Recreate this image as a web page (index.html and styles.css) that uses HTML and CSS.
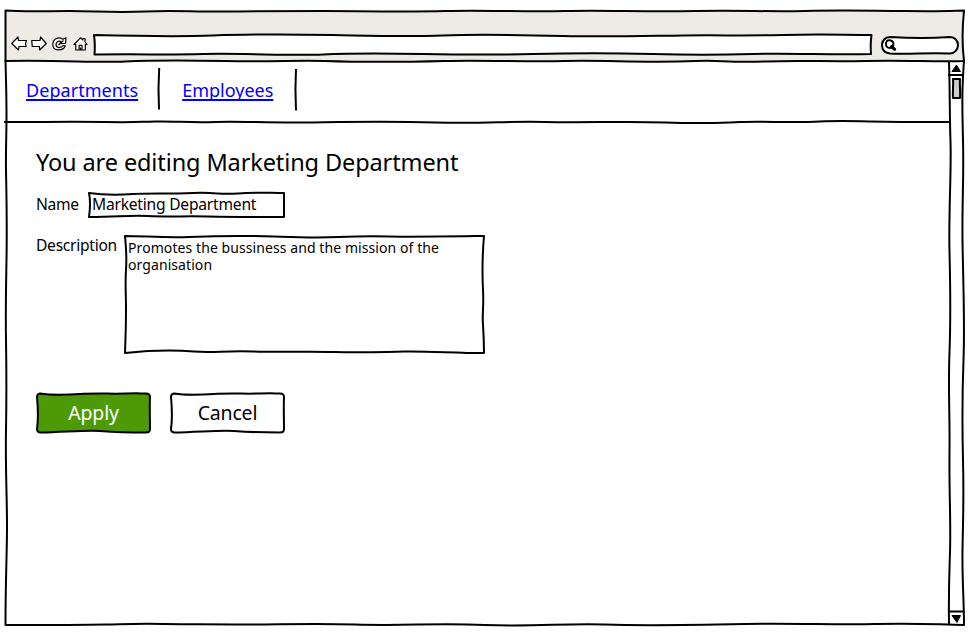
FILE: index.html
```html
<!DOCTYPE html>
<html lang="en">
<head>
<meta charset="utf-8">
<title>Marketing Department</title>
<link rel="stylesheet" href="styles.css">
</head>
<body>
<div class="window">
  <header class="toolbar">
    <svg class="sketch" viewBox="0 0 960 52"><path class="chrome" d="M0.500 0.500 C20 2 40 1 65 1 S110 3 140 1.500 S190 2 220 1.500 S290 1 320 1 S400 2 440 1 S520 2 560 1 S640 2 690 1 S760 2 800 1 S870 1 900 1 S930 2 959 0.500 C957 20 957 35 959 51 C930 52 900 50 860 51 S800 50 760 51.500 S715 49.500 690 51 C640 53 600 50 560 51 S480 50 440 51 S350 52 320 51 S270 52 220 51 S150 50 120 51.500 S60 50 0.500 51 Z"/></svg>
    <nav class="tools">
      <svg class="icon" width="16" height="15" viewBox="0 0 16 15"><path d="M0.700 7.500 L7 1 L7.500 4.500 L15.500 4.500 L14.500 7.500 L15 10.500 L8 10.500 L7.500 14 Z"/></svg>
      <svg class="icon" width="16" height="15" viewBox="0 0 16 15"><path d="M15.300 7.500 L9.500 1 L9 4.500 L0.700 4.500 L1.300 10.500 L8.500 10.500 L8.700 14 Z"/></svg>
      <svg class="icon" width="15" height="14" viewBox="0 0 15 14"><path d="M11 2.300 L14 0.800 L13.500 6.300 L7.800 6.500 L9.300 4.600 C7 3.200 4 4.700 4 7.500 C4 11 9 11.600 11 8.500 L13.300 8.800 C11 14.500 1 14.500 0.800 7.700 C0.700 1.500 7 -0.700 11 2.300 Z M6.500 8 L11.500 3.500"/></svg>
      <svg class="icon" width="15" height="14" viewBox="0 0 15 14"><path d="M1 7.500 L7.500 0.800 L9.800 3 L10 1.500 L12 1.500 L12 5 L14 7.500 L12.300 7.500 L12.300 13 L2.800 13 L2.800 7.500 Z M6 13 L6.200 8.300 L9 8.300 L9 13 M7.500 10.500 V13"/></svg>
    </nav>
    <div class="address"><svg class="sketch" viewBox="0 0 780 22"><path class="box" d="M1 1 C40 2 80 3 120 1.500 S210 0.500 240 1 S310 3 350 1.500 S430 1 470 2 S550 2 590 1.500 S650 2 690 1 S750 1 778.500 1 C777.500 8 777.500 14 778 20 C740 21 700 19 660 20 S600 21 560 20 S480 19 440 20 S380 21 330 20 S260 19 230 20.500 S150 19 110 20 S60 20 1.500 20.500 C2 14 2 8 1 1 Z"/></svg></div>
    <div class="search"><svg class="sketch" viewBox="0 0 78 19"><path class="box" d="M9 1 C24 2 44 3 69 1 C74 1 77 5 77 9 C77 14 73 17.500 69 17.500 C44 16.500 30 18.500 9 17.500 C4 17 1 14 1 9 C1 5 4 1 9 1 Z"/><path class="lens" d="M5.300 6 C6 3.700 11 3.700 12.200 6.500 C13 9 11.500 12 8.700 12 C5.500 12 4.200 9 5.300 6 Z"/><path class="handle" d="M10.500 10.500 L13.700 13.300"/></svg></div>
  </header>
  <div class="view">
    <main class="page">
      <nav class="links">
        <a href="#" class="departments">Departments</a>
        <svg class="divider" width="4" height="42" viewBox="0 0 4 42"><path d="M2.200 0 C1.300 14 1.300 28 2 41.500"/></svg>
        <a href="#" class="employees">Employees</a>
        <svg class="divider low" width="4" height="42" viewBox="0 0 4 42"><path d="M2 0 C1.200 14 1.300 28 2 41.500"/></svg>
        <svg class="rule" viewBox="0 0 946 4"><path d="M-1 2 C40 2 70 1.500 100 2 S130 2 150 1.500 S185 3 210 2 S260 3 300 2.500 S380 1 430 2.500 S500 1 540 2 S620 1 660 2.500 S710 3 735 2 S785 3 815 1.500 S870 2.500 944 2"/></svg>
      </nav>
      <section class="form">
        <h1>You are editing Marketing Department</h1>
        <div class="field name">
          <label>Name</label>
          <div class="input"><svg class="sketch" viewBox="0 0 197 26"><path class="box" d="M1 1 C15 3 30 3 45 2 S80 2 105 1 S130 3 150 1.500 S180 1 196 1 L196 25 C170 25 145 25 120 24.500 S80 25 60 24 S30 25 1 25 C2 18 2.500 8 1 1 Z"/></svg><span>Marketing Department</span></div>
        </div>
        <div class="field description">
          <label>Description</label>
          <div class="input area"><svg class="sketch" viewBox="0 0 361 119"><path class="box" d="M1 1 C20 1 40 3 65 2 S120 0.500 150 1.500 S190 3 215 2 S245 1 265 1.500 S320 1.500 360 1 C358.500 18 358 35 359 55 S358 75 359 90 S360 105 360 118 C330 118 305 116 280 116.500 S240 118 210 117 S160 117.500 130 116.500 S90 118 70 116.500 S30 115 1 118 C1.500 105 2 95 2 75 S1 50 2 35 S2 12 1 1 Z"/></svg><span>Promotes the bussiness and the mission of the<br>organisation</span></div>
        </div>
        <div class="actions">
          <button class="apply" type="button"><svg class="sketch" viewBox="0 0 115 41"><path class="box" d="M4 1.500 C14 3 28 3 44 2 S75 2 90 1.500 S104 1.500 110 1.500 Q114 1.500 114 5 C113.500 16 114 26 114 37 Q114 40.500 110 40.500 C95 40.500 78 40 64 39 S30 40 4 40.500 Q1 40 1 37 C2.500 27 2 16 1 5 Q1 2 4 1.500 Z"/></svg><span>Apply</span></button>
          <button class="cancel" type="button"><svg class="sketch" viewBox="0 0 115 41"><path class="box" d="M4 1.500 C14 3 28 3 44 2 S75 2 90 1.500 S104 1.500 110 1.500 Q114 1.500 114 5 C113.500 16 114 26 114 37 Q114 40.500 110 40.500 C95 40.500 78 40 64 39 S30 40 4 40.500 Q1 40 1 37 C2.500 27 2 16 1 5 Q1 2 4 1.500 Z"/></svg><span>Cancel</span></button>
        </div>
      </section>
    </main>
    <aside class="scrollbar"><svg class="sketch" viewBox="0 0 16 564"><path d="M1 0 C2 30 1.500 50 2.500 80 S0.500 150 1.500 190 S3 250 1.500 290 S2 350 1.500 390 S3 460 2 490 S0.500 530 1 563 M0 13 H16 M1 549.500 H15"/><path class="arrow" d="M8.500 3 L12.500 9.500 H4 Z M4 553.500 H12.500 L9 560.500 Z"/><path class="thumb" d="M5 17 H12 C11.500 22 12.500 30 12 36 H5 C4.500 30 5.500 22 5 17 Z"/></svg></aside>
  </div>
  <svg class="sketch" viewBox="0 0 960 616"><path d="M0.500 50 C1 70 1.500 85 1.500 105 S0.700 140 1 160 S2.200 210 1.500 250 S0.500 300 1 330 S1.700 380 1 420 S2.200 490 2 520 S0.500 570 0.500 615 C40 615 75 615 100 614.500 S130 613.500 160 614 S195 614 230 614.500 S300 613 350 614.500 S430 613 480 615 S560 613 600 614.500 S690 615 740 614 S830 615 870 614 S920 614 959 615 C959 590 957 570 957.500 540 S959 490 958 450 S957 390 958.500 350 S958 270 957.500 230 S959 170 958 130 S957 80 959 50"/></svg>
</div>
</body>
</html>
```
FILE: styles.css
```css
* { box-sizing: border-box; }
body { margin: 0; padding: 10px 7px 8px 5px; width: 972px; height: 634px; overflow: hidden; background: #fff; color: #000; font-family: "Noto Sans", "Open Sans", sans-serif; }
svg { fill: none; stroke: #000; stroke-width: 2; stroke-linejoin: round; overflow: visible; display: block; flex: none; }
.window { position: relative; width: 960px; height: 616px; display: flex; flex-direction: column; }
.sketch { position: absolute; inset: 0; width: 100%; height: 100%; pointer-events: none; }
.chrome { fill: #eeebe6; }
.box { fill: #fff; }
.toolbar { position: relative; height: 52px; display: flex; align-items: flex-start; padding: 24px 6px 0; }
.tools { position: relative; display: flex; gap: 5px; align-items: center; padding-top: 2px; width: 82px; }
.icon { stroke-width: 1.2; fill: #fff; }
.icon:nth-child(2) { margin-left: -1px; }
.icon:nth-child(4) { margin-left: 1px; }
.address { position: relative; width: 780px; height: 22px; }
.search { position: relative; width: 78px; height: 19px; margin: 2px 0 0 8px; }
.handle { stroke-width: 3; stroke-linecap: round; }
.view { flex: 1; display: flex; }
.page { width: 943px; }
.links { position: relative; height: 60px; display: flex; align-items: flex-start; padding: 6px 0 0 21px; }
.links a { color: #00f; font-size: 18px; line-height: 24px; margin-top: 10px; text-underline-offset: 2px; text-decoration-thickness: 2px; text-decoration-skip-ink: none; white-space: nowrap; }
.departments { letter-spacing: 0.050px; margin-right: 19px; }
.divider { margin-right: 21px; }
.employees { margin-right: 21px; }
.low { margin: 1px 0 0; }
.rule { position: absolute; left: 0; bottom: -2px; width: 946px; height: 4px; }
.form { padding: 25px 0 0 31px; }
h1 { margin: 0; font-size: 23.500px; font-weight: 400; line-height: 30px; height: 45px; letter-spacing: -0.110px; white-space: nowrap; }
.field { display: flex; font-size: 15.600px; line-height: 24px; letter-spacing: -0.220px; white-space: nowrap; }
.name label { width: 52px; letter-spacing: -0.350px; }
.input { position: relative; width: 197px; height: 26px; padding-left: 4px; }
.input span, button span { position: relative; }
.description { margin-top: 17px; }
.description label { width: 88px; line-height: 20px; letter-spacing: -0.270px; }
.area { width: 361px; height: 119px; font-size: 14px; line-height: 17px; letter-spacing: 0.080px; padding: 4px 0 0 4px; }
.actions { display: flex; gap: 19px; margin-top: 38px; }
button { position: relative; width: 115px; height: 41px; border: 0; padding: 0; background: none; font: 19.500px/38px "Noto Sans", sans-serif; letter-spacing: -0.200px; }
.apply { color: #fff; }
.apply .box { fill: #4e9a06; }
.cancel { color: #000; }
.scrollbar { position: relative; width: 16px; }
.arrow { fill: #000; stroke-width: 1; }
.thumb { fill: #ccc; }
```
